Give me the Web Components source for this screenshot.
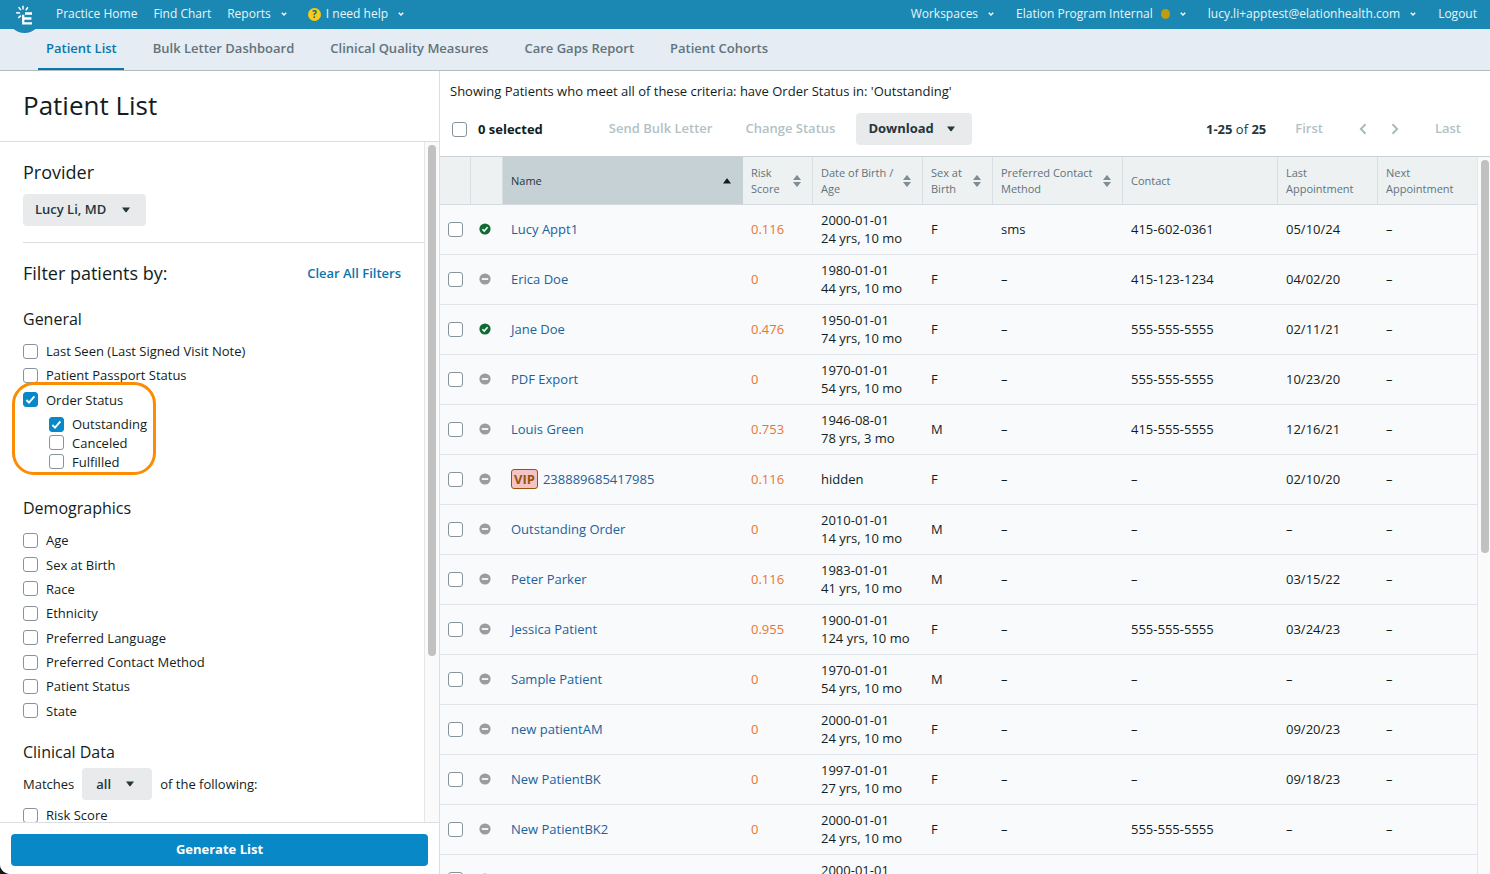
<!DOCTYPE html>
<html lang="en">
<head>
<meta charset="utf-8">
<meta name="viewport" content="width=device-width, initial-scale=1">
<title>Patient List</title>
<style>
  html { background: #14161c; }
  body {
    margin: 0;
    font: 13px/18px "Open Sans", "Noto Sans", sans-serif;
    color: #121d21;
    --blue: #0988c8;
    --link: #0b76ab;
    --muted: #b2c1c6;
    --grey-button: #e8eaec;
    --line: #d9dfe3;
  }
</style>
</head>
<body>
<app-shell></app-shell>

<script>
const define = (name, html, setup) => {
  const template = document.createElement('template');
  template.innerHTML = html;
  customElements.define(name, class extends HTMLElement {
    constructor() {
      super();
      this.attachShadow({ mode: 'open' }).append(template.content.cloneNode(true));
    }
    connectedCallback() {
      if (setup && !this.ready) { this.ready = true; setup(this, this.shadowRoot); }
    }
  });
};

/* Checkbox with its label text slotted in */
define('check-box', `
<style>
  :host { display: block; }
  label { display: flex; align-items: center; gap: 8px; }
  input {
    appearance: none; box-sizing: border-box; flex: none;
    width: 15px; height: 15px; margin: 0;
    border: 1px solid #87959b; border-radius: 3px; background: #fff;
  }
  .box { display: grid; flex: none; }
  .box > * { grid-area: 1 / 1; }
  svg { display: none; width: 15px; height: 15px; pointer-events: none; }
  input:checked { background: var(--blue); border-color: var(--blue); }
  input:checked + svg { display: block; }
</style>
<label><span class="box"><input type="checkbox"><svg viewBox="0 0 15 15"><path d="M3.4 8 6 10.6 11.4 4.4" fill="none" stroke="#fff" stroke-width="1.9"/></svg></span><slot></slot></label>`,
(host, root) => {
  const input = root.querySelector('input');
  input.checked = host.hasAttribute('checked');
  if (host.hasAttribute('name')) input.setAttribute('aria-label', host.getAttribute('name'));
});

/* Grey drop-down built on a native select */
define('drop-down', `
<style>
  :host { display: inline-grid; align-items: center; }
  select, svg { grid-area: 1 / 1; }
  select {
    appearance: none; height: 32px; margin: 0; padding: 0 39px 2px 12px;
    border: 0; border-radius: 4px; background: var(--grey-button);
    font: inherit; font-weight: 600; color: #25363c;
  }
  :host([compact]) select { padding: 0 41px 0 14px; }
  svg { justify-self: end; margin-right: 15px; width: 10px; height: 6px; pointer-events: none; }
  :host([compact]) svg { margin-right: 17px; }
</style>
<select></select><svg viewBox="0 0 10 6"><path d="M1 .5h8L5.6 4.9a.8.8 0 0 1-1.2 0z" fill="#25363c"/></svg>`,
(host, root) => {
  const select = root.querySelector('select');
  select.setAttribute('aria-label', host.getAttribute('label'));
  select.add(new Option(host.getAttribute('value')));
});

/* Thin scroll indicator beside a scrolling pane */
define('scroll-track', `
<style>
  :host { display: block; box-sizing: border-box; flex: none; background: #fafafa; border-left: 1px solid #e4e6e8; padding: 3px; }
  div { width: 8px; height: var(--thumb); border-radius: 4px; background: #c1c1c1; }
</style>
<div></div>`);

define('nav-item', `
<style>
  :host { display: block; white-space: nowrap; }
  a { display: flex; align-items: center; color: #e8f5fa; text-decoration: none; font-size: 12px; line-height: 18px; }
  svg { display: none; width: 6px; height: 4px; margin-left: 10px; }
  :host([menu]) svg { display: block; }
</style>
<a href="#"><slot></slot><svg viewBox="0 0 6 4"><path d="M.8.8 3 3 5.2.8" fill="none" stroke="#fff" stroke-width="1.4"/></svg></a>`);

define('top-bar', `
<style>
  :host { display: block; }
  nav { display: flex; align-items: center; height: 29px; padding: 0 13px 0 7px; background: #1b88b3; }
  .logo { align-self: flex-start; flex: none; width: 35px; height: 34px; margin-right: 14px; position: relative; z-index: 1; }
  .logo svg { display: block; }
  .left, .right { display: flex; align-items: center; gap: 16px; padding-bottom: 1px; }
  .right { gap: 22px; margin-left: auto; }
  .help { margin: 0 5px; width: 13px; height: 13px; border-radius: 50%; background: #f6cb1c; color: #1a607c; font-size: 10px; line-height: 13px; font-weight: 700; text-align: center; }
  .dot { width: 9px; height: 10px; margin: 0 0 0 8px; border-radius: 50%; background: #c19c0c; }
</style>
<nav>
  <a class="logo" href="#" aria-label="Elation">
    <svg width="35" height="34" viewBox="0 0 35 34">
      <circle cx="17.5" cy="16" r="17" fill="#1b88b3"/>
      <g stroke="#fff" fill="none">
        <path d="M16.2 14.8V24.5M15 23.3H25M15.2 18.5H24.4M18 13.5H25" stroke-width="2.3"/>
        <path d="M16 5.8v3.8M11.6 7.1l2.3 3M20.9 7.3l-2.1 2.9M9.1 12.7l4 .3M11.3 17.9l2.6-2.3" stroke-width="1.5"/>
      </g>
    </svg>
  </a>
  <div class="left">
    <nav-item>Practice Home</nav-item>
    <nav-item>Find Chart</nav-item>
    <nav-item menu>Reports</nav-item>
    <nav-item menu><span class="help">?</span>I need help</nav-item>
  </div>
  <div class="right">
    <nav-item menu>Workspaces</nav-item>
    <nav-item menu>Elation Program Internal<span class="dot"></span></nav-item>
    <nav-item menu>lucy.li+apptest@elationhealth.com</nav-item>
    <nav-item>Logout</nav-item>
  </div>
</nav>`);

define('tab-bar', `
<style>
  :host { display: block; background: #e5ecf3; border-bottom: 1px solid #b1bdc5; }
  nav { display: flex; gap: 21px; height: 41px; padding-left: 38px; }
  a {
    box-sizing: border-box; padding: 10px 8px 0 8px; color: #62737b; font-weight: 600;
    text-decoration: none; white-space: nowrap; border-bottom: 2px solid transparent;
  }
  a + a { padding-right: 7px; }
  a[aria-current] { color: var(--link); border-color: var(--link); padding-right: 7px; }
</style>
<nav>
  <a href="#" aria-current="page">Patient List</a>
  <a href="#">Bulk Letter Dashboard</a>
  <a href="#">Clinical Quality Measures</a>
  <a href="#">Care Gaps Report</a>
  <a href="#">Patient Cohorts</a>
</nav>`);

define('filter-panel', `
<style>
  :host { display: flex; flex-direction: column; box-sizing: border-box; width: 440px; flex: none; background: #fff; border-right: 1px solid var(--line); }
  h1, h2, h3 { margin: 0; font-weight: 400; line-height: 24px; }
  h1 { padding: 16px 23px 18px; font-size: 26px; line-height: 36px; border-bottom: 1px solid var(--line); }
  h2 { font-size: 18px; }
  h3 { font-size: 16px; }
  .body { flex: 1; min-height: 0; display: flex; }
  .scroll { flex: 1; overflow: auto; scrollbar-width: none; padding: 18px 0 0 23px; }
  scroll-track { width: 15px; --thumb: 511px; }
  .provider { padding-bottom: 16px; border-bottom: 1px solid var(--line); }
  .provider drop-down { display: inline-grid; margin-top: 10px; vertical-align: top; }
  .title { display: flex; justify-content: space-between; align-items: center; margin: 18px 23px 22px 0; }
  .title a { color: var(--link); font-weight: 600; text-decoration: none; }
  .rows { display: grid; grid-auto-rows: 1fr; align-items: center; margin-top: 8px; }
  .general { height: 73px; }
  .demographics { height: 195px; margin-bottom: 17px; }
  .order { position: relative; height: 56px; margin: 3px 0 25px 26px; }
  .highlight {
    position: absolute; box-sizing: border-box; left: -37px; top: -33px; width: 144px; height: 93px;
    border: 3px solid #fb8c04; border-radius: 22px; pointer-events: none;
  }
  .match { display: flex; align-items: center; gap: 8px; margin: 4px 0 6px; }
  footer { padding: 11px 11px 8px; border-top: 1px solid var(--line); }
  footer button {
    display: block; width: 100%; height: 32px; border: 0; border-radius: 4px; padding: 0 0 2px;
    background: var(--blue); color: #fff; font: inherit; font-weight: 700;
  }
</style>
<h1>Patient List</h1>
<div class="body">
  <div class="scroll">
    <div class="provider">
      <h2>Provider</h2>
      <drop-down label="Provider" value="Lucy Li, MD"></drop-down>
    </div>
    <div class="title"><h2>Filter patients by:</h2><a href="#">Clear All Filters</a></div>
    <h3>General</h3>
    <div class="rows general">
      <check-box>Last Seen (Last Signed Visit Note)</check-box>
      <check-box>Patient Passport Status</check-box>
      <check-box checked>Order Status</check-box>
    </div>
    <div class="rows order">
      <check-box checked>Outstanding</check-box>
      <check-box>Canceled</check-box>
      <check-box>Fulfilled</check-box>
      <div class="highlight"></div>
    </div>
    <h3>Demographics</h3>
    <div class="rows demographics">
      <check-box>Age</check-box>
      <check-box>Sex at Birth</check-box>
      <check-box>Race</check-box>
      <check-box>Ethnicity</check-box>
      <check-box>Preferred Language</check-box>
      <check-box>Preferred Contact Method</check-box>
      <check-box>Patient Status</check-box>
      <check-box>State</check-box>
    </div>
    <h3>Clinical Data</h3>
    <div class="match"><span>Matches</span><drop-down compact label="Match" value="all"></drop-down><span>of the following:</span></div>
    <check-box>Risk Score</check-box>
  </div>
  <scroll-track></scroll-track>
</div>
<footer><button type="button">Generate List</button></footer>`);

define('results-toolbar', `
<style>
  :host { display: block; padding: 11px 17px 11px 10px; }
  p { margin: 0 0 13px; }
  .bar, .pager { display: flex; align-items: center; white-space: nowrap; }
  .bar { padding-left: 2px; }
  .count { font-weight: 700; margin: 0 54px 0 11px; }
  button {
    display: flex; align-items: center; height: 32px; margin: 0; padding: 0 12px 2px; border: 0;
    border-radius: 4px; background: none; font: inherit; font-weight: 600; color: #25363c;
  }
  button:disabled { color: var(--muted); }
  .change { margin: 0 9px; }
  .download { background: var(--grey-button); padding-right: 16px; font-weight: 700; }
  .download svg { margin: 2px 0 0 12px; }
  .pager { margin-left: auto; color: #25363c; }
  .first { margin: 0 12px 0 17px; }
  .last { margin-left: 12px; }
  .step { padding: 0 12px; }
</style>
<p>Showing Patients who meet all of these criteria: have Order Status in: 'Outstanding'</p>
<div class="bar">
  <check-box name="Select all"></check-box>
  <span class="count">0 selected</span>
  <button type="button" disabled>Send Bulk Letter</button>
  <button type="button" class="change" disabled>Change Status</button>
  <button type="button" class="download">Download<svg width="10" height="6" viewBox="0 0 10 6"><path d="M1 .5h8L5.6 4.9a.8.8 0 0 1-1.2 0z" fill="#25363c"/></svg></button>
  <div class="pager">
    <span><b>1-25</b> of <b>25</b></span>
    <button type="button" class="first" disabled>First</button>
    <button type="button" class="step" disabled aria-label="Previous"><svg width="8" height="12" viewBox="0 0 8 12"><path d="M6.5 1.2 1.9 6l4.6 4.8" fill="none" stroke="#a9bac0" stroke-width="2"/></svg></button>
    <button type="button" class="step" disabled aria-label="Next"><svg width="8" height="12" viewBox="0 0 8 12"><path d="M1.5 1.2 6.1 6l-4.6 4.8" fill="none" stroke="#a9bac0" stroke-width="2"/></svg></button>
    <button type="button" class="last" disabled>Last</button>
  </div>
</div>`);

const patients = [
  ['Lucy Appt1', '0.116', '2000-01-01', '24 yrs, 10 mo', 'F', 'sms', '415-602-0361', '05/10/24', 1],
  ['Erica Doe', '0', '1980-01-01', '44 yrs, 10 mo', 'F', '–', '415-123-1234', '04/02/20'],
  ['Jane Doe', '0.476', '1950-01-01', '74 yrs, 10 mo', 'F', '–', '555-555-5555', '02/11/21', 1],
  ['PDF Export', '0', '1970-01-01', '54 yrs, 10 mo', 'F', '–', '555-555-5555', '10/23/20'],
  ['Louis Green', '0.753', '1946-08-01', '78 yrs, 3 mo', 'M', '–', '415-555-5555', '12/16/21'],
  ['238889685417985', '0.116', 'hidden', '', 'F', '–', '–', '02/10/20'],
  ['Outstanding Order', '0', '2010-01-01', '14 yrs, 10 mo', 'M', '–', '–', '–'],
  ['Peter Parker', '0.116', '1983-01-01', '41 yrs, 10 mo', 'M', '–', '–', '03/15/22'],
  ['Jessica Patient', '0.955', '1900-01-01', '124 yrs, 10 mo', 'F', '–', '555-555-5555', '03/24/23'],
  ['Sample Patient', '0', '1970-01-01', '54 yrs, 10 mo', 'M', '–', '–', '–'],
  ['new patientAM', '0', '2000-01-01', '24 yrs, 10 mo', 'F', '–', '–', '09/20/23'],
  ['New PatientBK', '0', '1997-01-01', '27 yrs, 10 mo', 'F', '–', '–', '09/18/23'],
  ['New PatientBK2', '0', '2000-01-01', '24 yrs, 10 mo', 'F', '–', '555-555-5555', '–'],
  ['', '', '2000-01-01', '&nbsp;', '', '', '', ''],
];
const active = '<svg width="12" height="12" viewBox="0 0 12 12"><circle cx="6" cy="6" r="5.6" fill="#0f6b33"/><path d="M3.4 6.2 5.2 8 8.6 4.3" fill="none" stroke="#fff" stroke-width="1.6"/></svg>';
const inactive = '<svg width="12" height="12" viewBox="0 0 12 12"><circle cx="6" cy="6" r="5.6" fill="#9c9c9c"/><path d="M2.8 6h6.4" stroke="#fff" stroke-width="1.7"/></svg>';
const sort = '<svg width="10" height="12" viewBox="0 0 10 12"><path d="M1 5 4.5.4a.6.6 0 0 1 1 0L9 5zM1 7h8L5.5 11.6a.6.6 0 0 1-1 0z" fill="#7e8d94"/></svg>';

define('patient-table', `
<style>
  :host { display: flex; flex: 1; min-height: 0; border-top: 1px solid #cbd2d6; }
  .scroll { flex: 1; min-width: 0; overflow: auto; scrollbar-width: none; background: #f9fafc; }
  scroll-track { width: 13px; --thumb: 393px; }
  table { width: 100%; border-collapse: separate; border-spacing: 0; table-layout: fixed; }
  th {
    box-sizing: border-box; height: 48px; padding: 1px 8px 0 8px; text-align: left; font-weight: 400; font-size: 11px; line-height: 16px;
    color: #62737b; background: #edf1f2; border-right: 1px solid #d8dee1; border-bottom: 1px solid #d3d9dd;
  }
  th:last-child { border-right: 0; }
  th[aria-sort] { background: #c6d1d6; color: #25363c; border-right-color: #c6d1d6; }
  th div { display: flex; align-items: center; justify-content: space-between; }
  th svg { flex: none; margin-right: 2px; }
  td { box-sizing: border-box; height: 50px; padding: 0 0 2px 8px; border-bottom: 1px solid #e1e4e9; white-space: nowrap; }
  td:first-child { padding-bottom: 0; }
  td:nth-child(2) { padding-left: 8px; }
  td svg { display: block; }
  td a { color: #1a639b; text-decoration: none; }
  .score { color: #e87630; }
  .vip {
    display: inline-block; box-sizing: border-box; height: 20px; padding: 0 2px; margin-right: 5px;
    border: 1px solid #95540b; border-radius: 3px; background: #f5c3c3; color: #95540b; font-weight: 700;
  }
</style>
<div class="scroll">
<table>
  <colgroup><col width="31"><col width="32"><col><col width="70"><col width="110"><col width="70"><col width="130"><col width="155"><col width="100"><col width="99"></colgroup>
  <thead><tr>
    <th></th><th></th>
    <th aria-sort="ascending"><div>Name<svg width="10" height="6" viewBox="0 0 10 6"><path d="M1 5.5h8L5.5.7a.6.6 0 0 0-1 0z" fill="#121d21"/></svg></div></th>
    <th><div><span>Risk<br>Score</span>${sort}</div></th>
    <th><div><span>Date of Birth /<br>Age</span>${sort}</div></th>
    <th><div><span>Sex at<br>Birth</span>${sort}</div></th>
    <th><div><span>Preferred Contact<br>Method</span>${sort}</div></th>
    <th>Contact</th><th>Last<br>Appointment</th><th>Next<br>Appointment</th>
  </tr></thead>
  <tbody></tbody>
</table>
</div>
<scroll-track></scroll-track>`,
(host, root) => {
  root.querySelector('tbody').innerHTML = patients.map(([name, score, dob, age, sex, method, contact, last, on], i) => `
    <tr><td><check-box name="Select row ${i + 1}"></check-box></td><td>${on ? active : inactive}</td>
    <td>${dob === 'hidden' ? '<span class="vip">VIP</span>' : ''}<a href="#">${name}</a></td>
    <td class="score">${score}</td><td>${dob}${age ? '<br>' + age : ''}</td><td>${sex}</td><td>${method}</td>
    <td>${contact}</td><td>${last}</td><td>${name ? '–' : ''}</td></tr>`).join('');
});

define('app-shell', `
<style>
  :host { display: flex; flex-direction: column; height: 100vh; overflow: hidden; background: #fff; border-bottom-left-radius: 10px; }
  main { display: flex; flex: 1; min-height: 0; }
  section { display: flex; flex-direction: column; flex: 1; min-width: 0; }
</style>
<top-bar></top-bar>
<tab-bar></tab-bar>
<main>
  <filter-panel></filter-panel>
  <section><results-toolbar></results-toolbar><patient-table></patient-table></section>
</main>`);
</script>
</body>
</html>
